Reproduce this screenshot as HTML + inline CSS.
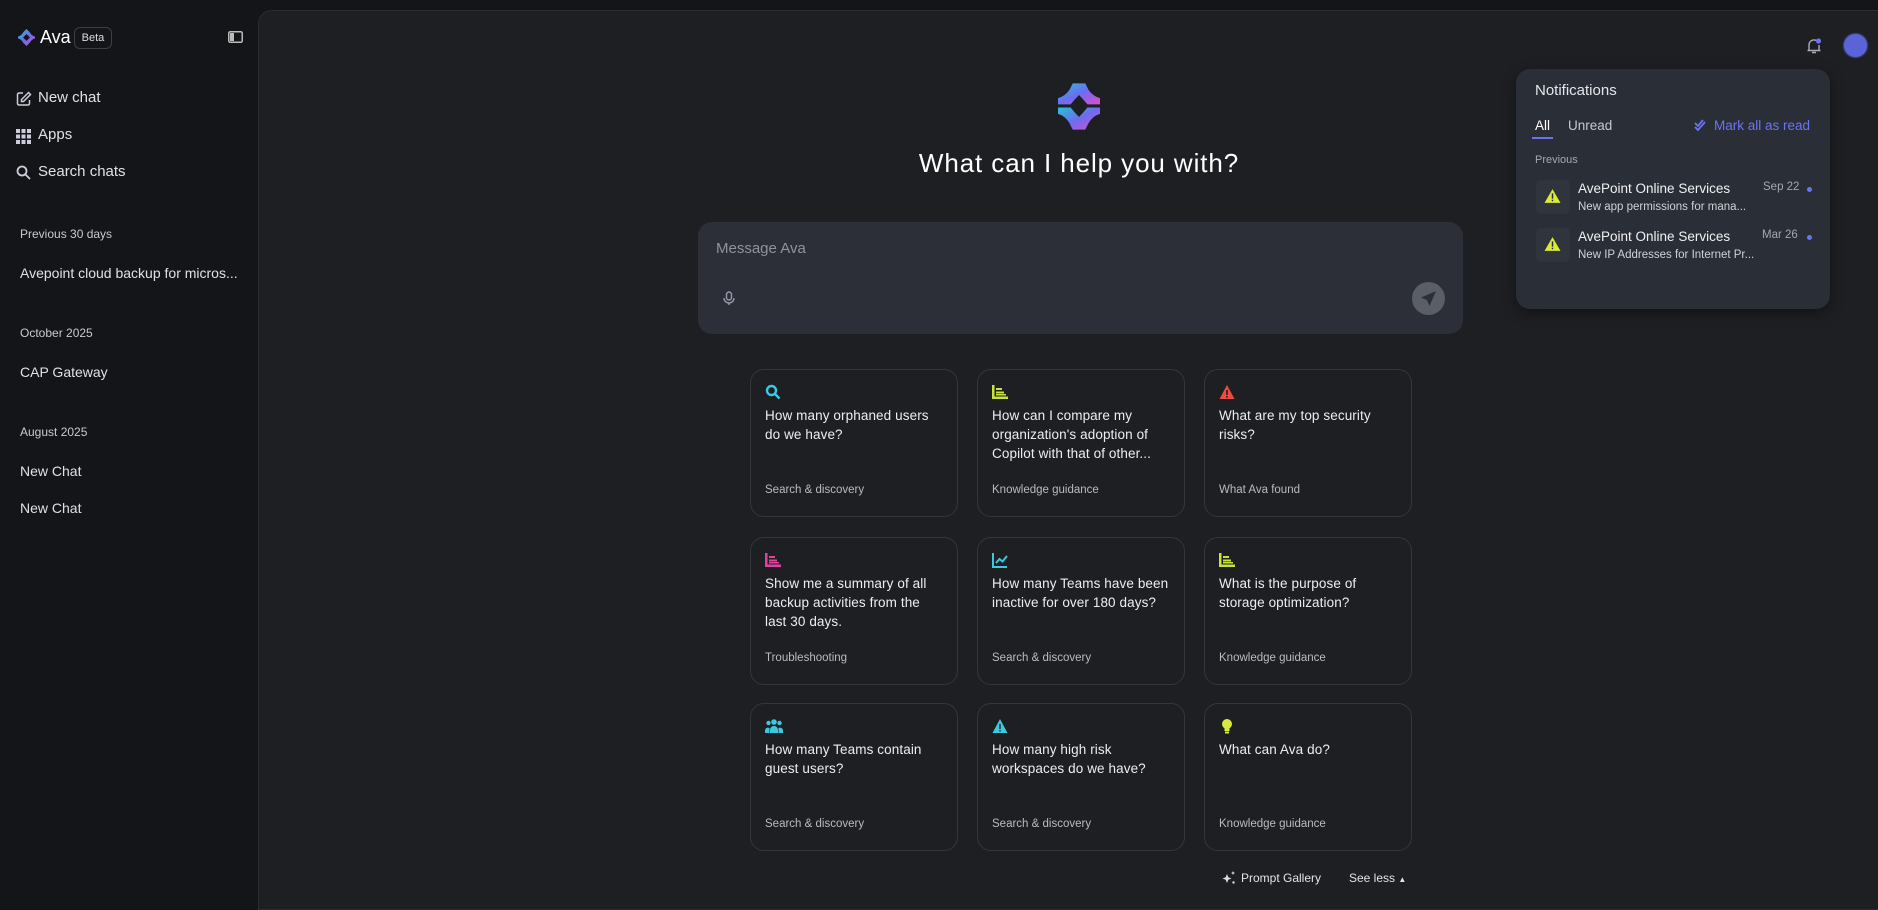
<!DOCTYPE html>
<html><head><meta charset="utf-8"><style>
*{box-sizing:border-box;margin:0;padding:0}
body{width:1878px;height:895px;overflow:hidden;background:#141518;font-family:"Liberation Sans",sans-serif;color:#e6e7ea;position:relative}
.a{position:absolute;white-space:nowrap}
.side{font-size:15px;color:#dfe1e6}
.grp{font-size:12px;color:#c8cad0}
.main{position:absolute;left:258px;top:10px;width:1640px;height:900px;background:#1e1f23;border-radius:14px 0 0 0;border:1px solid #2a2c31}
.card{position:absolute;width:208px;height:148px;border:1px solid #34363c;border-radius:14px;background:#1e1f23}
.card .q{position:absolute;left:14px;top:36px;font-size:13.5px;line-height:19px;color:#eceef1;white-space:nowrap;letter-spacing:0.1px}
.card .c{position:absolute;left:14px;top:114px;font-size:11.5px;color:#b9bbc1}
.card svg{position:absolute;left:14px;top:14px}
.np{position:absolute;left:1516px;top:69px;width:314px;height:240px;background:#2a2e37;border-radius:14px;box-shadow:0 4px 14px rgba(0,0,0,.4)}
</style></head><body>
<svg class="a" style="left:18px;top:29px" width="17" height="17" viewBox="0 0 20 20"><defs><linearGradient id="g1" x1="0" y1="0" x2="1" y2="1"><stop offset="0" stop-color="#2ec5d3"/><stop offset=".5" stop-color="#6a6cf0"/><stop offset="1" stop-color="#d14fc7"/></linearGradient></defs><path d="M10 0 L14 4 Q16 8 20 9 L20 11 Q16 12 14 16 L10 20 L6 16 Q4 12 0 11 L0 9 Q4 8 6 4Z M10 6 L6 10 L10 14 L14 10Z" fill="url(#g1)" fill-rule="evenodd"/></svg>
<div class="a" style="left:40px;top:27px;font-size:18px;color:#fff">Ava</div>
<div class="a" style="left:74px;top:27px;width:38px;height:22px;border:1px solid #3c3e44;border-radius:6px;font-size:11px;color:#ddd;text-align:center;line-height:20px">Beta</div>
<svg class="a" style="left:228px;top:31px" width="15" height="12" viewBox="0 0 15 12"><rect x=".75" y=".75" width="13.5" height="10.5" rx="1.5" fill="none" stroke="#bbb" stroke-width="1.5"/><rect x="2" y="2" width="4" height="8" fill="#bbb"/></svg>
<svg class="a" style="left:16px;top:91px" width="16" height="16" viewBox="0 0 16 16" fill="none" stroke="#ccd" stroke-width="1.5"><path d="M7 2H3a1.5 1.5 0 0 0-1.5 1.5v9A1.5 1.5 0 0 0 3 14h9a1.5 1.5 0 0 0 1.5-1.5V9"/><path d="M12.5 1.5l2 2-7 7H5.5V8.5z"/></svg>
<div class="a side" style="left:38px;top:89px">New chat</div>
<svg class="a" style="left:16px;top:129px" width="15" height="15" viewBox="0 0 15 15" fill="#ccd"><rect x="0" y="0" width="4" height="4"/><rect x="5.5" y="0" width="4" height="4"/><rect x="11" y="0" width="4" height="4"/><rect x="0" y="5.5" width="4" height="4"/><rect x="5.5" y="5.5" width="4" height="4"/><rect x="11" y="5.5" width="4" height="4"/><rect x="0" y="11" width="4" height="4"/><rect x="5.5" y="11" width="4" height="4"/><rect x="11" y="11" width="4" height="4"/></svg>
<div class="a side" style="left:38px;top:126px">Apps</div>
<svg class="a" style="left:16px;top:165px" width="15" height="15" viewBox="0 0 15 15" fill="none" stroke="#ccd" stroke-width="1.8"><circle cx="6" cy="6" r="4.5"/><path d="M9.5 9.5L14 14"/></svg>
<div class="a side" style="left:38px;top:163px">Search chats</div>
<div class="a grp" style="left:20px;top:227px">Previous 30 days</div>
<div class="a side" style="left:20px;top:265px;font-size:14px">Avepoint cloud backup for micros...</div>
<div class="a grp" style="left:20px;top:326px">October 2025</div>
<div class="a side" style="left:20px;top:364px;font-size:14px">CAP Gateway</div>
<div class="a grp" style="left:20px;top:425px">August 2025</div>
<div class="a side" style="left:20px;top:463px;font-size:14px">New Chat</div>
<div class="a side" style="left:20px;top:500px;font-size:14px">New Chat</div>

<div class="main"></div>
<svg class="a" style="left:1805px;top:37px" width="18" height="18" viewBox="0 0 18 18" fill="none" stroke="#aab" stroke-width="1.4"><path d="M4 13V8a5 5 0 0 1 8-4M14 8v5M2.5 13.5h13M7 15.5h4"/><circle cx="13.5" cy="4" r="2.6" fill="#6b73f5" stroke="none"/></svg>
<div class="a" style="left:1844px;top:34px;width:23px;height:23px;border-radius:50%;background:#5964d8;box-shadow:0 0 2px #7a84ff"></div>

<svg class="a" style="left:1058px;top:83px" width="42" height="47" viewBox="0 0 40 44"><defs><linearGradient id="g2" x1="0" y1="0" x2="1" y2="1"><stop offset="0" stop-color="#25c4cf"/><stop offset=".5" stop-color="#6c6cf3"/><stop offset="1" stop-color="#dc4fc4"/></linearGradient></defs><path d="M14 0h12l3 6q4 6 11 8v6H28q-4-5-8-9q-4 4-8 9H0v-6q7-2 11-8z" fill="url(#g2)"/><path d="M0 23h12q4 5 8 9q4-4 8-9h12v6q-7 2-11 9l-3 6H14l-3-6Q7 31 0 29z" fill="url(#g2)"/></svg>
<div class="a" style="left:0;width:2158px;top:148px;text-align:center;font-size:26px;letter-spacing:0.9px;color:#fff">What can I help you with?</div>

<div class="a" style="left:698px;top:222px;width:765px;height:112px;background:#2c2f37;border-radius:14px"></div>
<div class="a" style="left:716px;top:240px;font-size:15px;color:#8e939c">Message Ava</div>
<svg class="a" style="left:723px;top:291px" width="12" height="15" viewBox="0 0 12 15" fill="none" stroke="#99a" stroke-width="1.4"><rect x="3.5" y="1" width="5" height="8" rx="2.5"/><path d="M1 7a5 5 0 0 0 10 0M6 12v2"/></svg>
<div class="a" style="left:1412px;top:282px;width:33px;height:33px;border-radius:50%;background:#5a5e67"></div>
<svg class="a" style="left:1420px;top:290px" width="17" height="17" viewBox="0 0 16 16" fill="#2c2f37"><path d="M15 1L1 7l5.5 2.5L9 15z"/></svg>

<div class="card" style="left:750px;top:369px"><svg width="16" height="16" viewBox="0 0 16 16" fill="none" stroke="#3ec8e0" stroke-width="2.4"><circle cx="6.5" cy="6.5" r="4.5"/><path d="M10 10l4.5 4.5"/></svg><div class="q">How many orphaned users<br>do we have?</div><div class="c">Search &amp; discovery</div></div>
<div class="card" style="left:977px;top:369px"><svg width="16" height="16" viewBox="0 0 16 16" fill="#c8e23c"><rect x="0" y="1" width="2.5" height="14"/><rect x="0" y="12.5" width="16" height="2.5"/><rect x="4" y="4" width="6" height="2"/><rect x="4" y="7.5" width="8" height="2"/><rect x="4" y="10" width="10" height="1.5"/></svg><div class="q">How can I compare my<br>organization's adoption of<br>Copilot with that of other...</div><div class="c">Knowledge guidance</div></div>
<div class="card" style="left:1204px;top:369px"><svg width="16" height="16" viewBox="0 0 16 16"><path d="M8 1L15.5 15H.5z" fill="#f04a3f"/><rect x="7.2" y="6" width="1.6" height="5" fill="#1e1f23"/><rect x="7.2" y="12" width="1.6" height="1.6" fill="#1e1f23"/></svg><div class="q">What are my top security<br>risks?</div><div class="c">What Ava found</div></div>

<div class="card" style="left:750px;top:537px"><svg width="16" height="16" viewBox="0 0 16 16" fill="#e0449a"><rect x="0" y="1" width="2.5" height="14"/><rect x="0" y="12.5" width="16" height="2.5"/><rect x="4" y="4" width="6" height="2"/><rect x="4" y="7.5" width="8" height="2"/><rect x="4" y="10" width="10" height="1.5"/></svg><div class="q">Show me a summary of all<br>backup activities from the<br>last 30 days.</div><div class="c">Troubleshooting</div></div>
<div class="card" style="left:977px;top:537px"><svg width="16" height="16" viewBox="0 0 16 16" fill="none" stroke="#3ec8e0" stroke-width="2"><path d="M1 1v14h14"/><path d="M4 11l3.5-4 3 2.5L15 4"/></svg><div class="q">How many Teams have been<br>inactive for over 180 days?</div><div class="c">Search &amp; discovery</div></div>
<div class="card" style="left:1204px;top:537px"><svg width="16" height="16" viewBox="0 0 16 16" fill="#c8e23c"><rect x="0" y="1" width="2.5" height="14"/><rect x="0" y="12.5" width="16" height="2.5"/><rect x="4" y="4" width="6" height="2"/><rect x="4" y="7.5" width="8" height="2"/><rect x="4" y="10" width="10" height="1.5"/></svg><div class="q">What is the purpose of<br>storage optimization?</div><div class="c">Knowledge guidance</div></div>

<div class="card" style="left:750px;top:703px"><svg width="18" height="16" viewBox="0 0 18 16" fill="#3ec8e0"><circle cx="9" cy="4" r="2.8"/><circle cx="3.5" cy="5" r="2.2"/><circle cx="14.5" cy="5" r="2.2"/><path d="M5 15v-3a4 4 0 0 1 8 0v3z"/><path d="M0 15v-2.5a3 3 0 0 1 4.5-2.5V15zM18 15v-2.5a3 3 0 0 0-4.5-2.5V15z"/></svg><div class="q">How many Teams contain<br>guest users?</div><div class="c">Search &amp; discovery</div></div>
<div class="card" style="left:977px;top:703px"><svg width="16" height="16" viewBox="0 0 16 16"><path d="M8 1L15.5 15H.5z" fill="#3ec8e0"/><rect x="7.3" y="6" width="1.4" height="5" fill="#1e1f23"/><rect x="7.3" y="12" width="1.4" height="1.4" fill="#1e1f23"/></svg><div class="q">How many high risk<br>workspaces do we have?</div><div class="c">Search &amp; discovery</div></div>
<div class="card" style="left:1204px;top:703px"><svg width="16" height="16" viewBox="0 0 16 16" fill="#d8ea3a"><circle cx="8" cy="6" r="5"/><rect x="5.5" y="10" width="5" height="3"/><rect x="6" y="13.5" width="4" height="2"/></svg><div class="q">What can Ava do?</div><div class="c">Knowledge guidance</div></div>

<svg class="a" style="left:1222px;top:871px" width="14" height="14" viewBox="0 0 14 14" fill="#ddd"><path d="M5 3l1.3 3.2L9.5 7.5 6.3 8.8 5 12 3.7 8.8.5 7.5l3.2-1.3z"/><path d="M11 0l.6 1.4L13 2l-1.4.6L11 4l-.6-1.4L9 2l1.4-.6z"/><circle cx="11.5" cy="11.5" r="1.2"/></svg>
<div class="a" style="left:1241px;top:871px;font-size:12px;color:#e3e4e8">Prompt Gallery</div>
<div class="a" style="left:1349px;top:871px;font-size:12px;color:#e3e4e8">See less <span style="font-size:8px">▲</span></div>

<div class="np">
<div class="a" style="left:19px;top:13px;font-size:15px;color:#e4e6ea">Notifications</div>
<div class="a" style="left:19px;top:49px;font-size:13.5px;color:#fff">All</div>
<div class="a" style="left:16px;top:68px;width:21px;height:2px;background:#6b73f5"></div>
<div class="a" style="left:52px;top:49px;font-size:13.5px;color:#c6c8cd">Unread</div>
<svg class="a" style="left:178px;top:50px" width="13" height="13" viewBox="0 0 13 13" fill="none" stroke="#6b73f5" stroke-width="1.8"><path d="M1 4l3 3 5-6M1 8l3 3 7-8"/></svg>
<div class="a" style="left:198px;top:49px;font-size:13.5px;color:#6b73f5">Mark all as read</div>
<div class="a" style="left:19px;top:85px;font-size:11px;color:#a4a7ae">Previous</div>
<div class="a" style="left:20px;top:111px;width:34px;height:34px;background:#30343d;border-radius:5px"></div>
<svg class="a" style="left:28px;top:119px" width="17" height="16" viewBox="0 0 16 15"><path d="M8 1l7.5 13H.5z" fill="#d8ea3a"/><rect x="7.3" y="5" width="1.4" height="5" fill="#2a2e37"/><rect x="7.3" y="11" width="1.4" height="1.4" fill="#2a2e37"/></svg>
<div class="a" style="left:62px;top:112px;font-size:13.5px;color:#f0f1f3">AvePoint Online Services</div>
<div class="a" style="left:62px;top:132px;font-size:11.5px;color:#d0d2d6">New app permissions for mana...</div>
<div class="a" style="left:247px;top:112px;font-size:11.5px;color:#a4a7ae">Sep 22</div>
<div class="a" style="left:291px;top:118px;width:5px;height:5px;border-radius:50%;background:#6b73f5"></div>
<div class="a" style="left:20px;top:159px;width:34px;height:34px;background:#30343d;border-radius:5px"></div>
<svg class="a" style="left:28px;top:167px" width="17" height="16" viewBox="0 0 16 15"><path d="M8 1l7.5 13H.5z" fill="#d8ea3a"/><rect x="7.3" y="5" width="1.4" height="5" fill="#2a2e37"/><rect x="7.3" y="11" width="1.4" height="1.4" fill="#2a2e37"/></svg>
<div class="a" style="left:62px;top:160px;font-size:13.5px;color:#f0f1f3">AvePoint Online Services</div>
<div class="a" style="left:62px;top:180px;font-size:11.5px;color:#d0d2d6">New IP Addresses for Internet Pr...</div>
<div class="a" style="left:246px;top:160px;font-size:11.5px;color:#a4a7ae">Mar 26</div>
<div class="a" style="left:291px;top:166px;width:5px;height:5px;border-radius:50%;background:#6b73f5"></div>
</div>
</body></html>
